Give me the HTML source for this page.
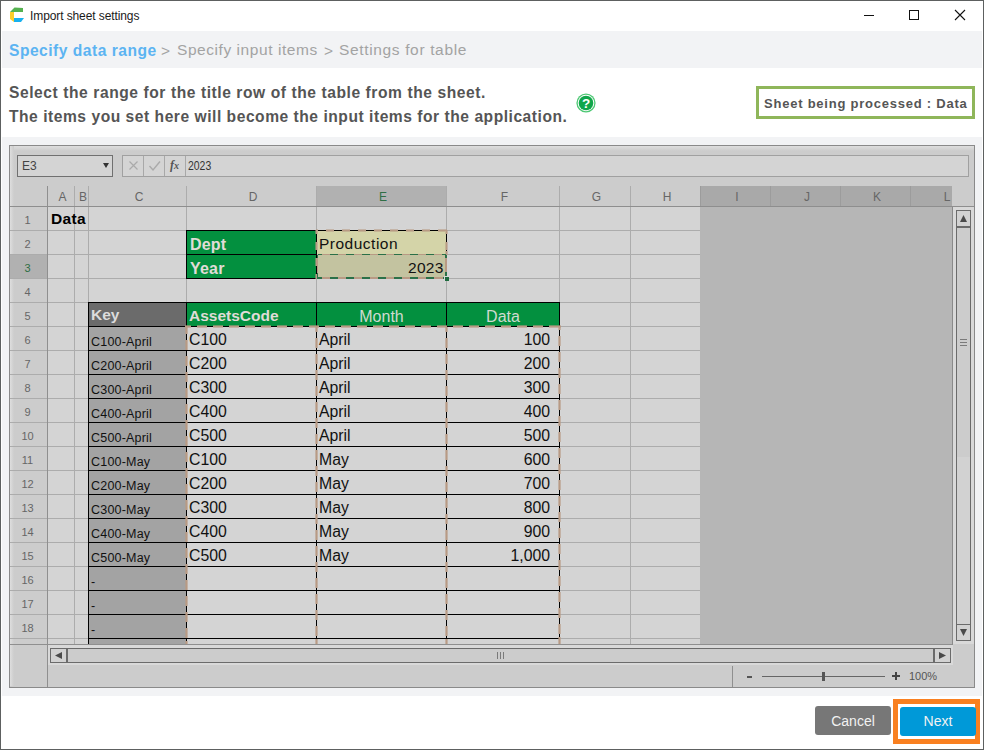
<!DOCTYPE html><html><head><meta charset="utf-8"><style>
html,body{margin:0;padding:0;}
body{width:984px;height:750px;position:relative;overflow:hidden;background:#fff;font-family:"Liberation Sans",sans-serif;}
div{position:absolute;box-sizing:border-box;}
.t{white-space:pre;line-height:1;}
</style></head><body>
<div style="left:0px;top:0px;width:984px;height:750px;border:1px solid #5d6060;"></div>
<svg style="position:absolute;left:0;top:0" width="40" height="30">
<polygon points="10,12 14.5,7.5 23,8 23,12" fill="#55b150"/>
<polygon points="10,12 14,12 14,22 10,19" fill="#fbcd2b"/>
<polygon points="14,18 24,18 21,22 14,22" fill="#18b0ee"/>
</svg>
<div class="t" style="left:30px;top:10px;font-size:12px;color:#1a1a1a;letter-spacing:-0.1px;">Import sheet settings</div>
<div style="left:864px;top:15px;width:10px;height:1px;background:#111;"></div>
<div style="left:909px;top:10px;width:10px;height:10px;border:1px solid #111;"></div>
<svg style="position:absolute;left:954px;top:9px" width="12" height="12"><path d="M1 1L11 11M11 1L1 11" stroke="#111" stroke-width="1.1"/></svg>
<div style="left:2px;top:31px;width:980px;height:37px;background:#f2f3f5;"></div>
<div class="t" style="left:9px;top:43px;font-size:15.6px;font-weight:bold;color:#5cb4f2;letter-spacing:0.5px;">Specify data range</div>
<div class="t" style="left:161px;top:43px;font-size:15.5px;color:#a3a3a3;">&gt;</div>
<div class="t" style="left:177px;top:42px;font-size:15.5px;color:#a3a3a3;letter-spacing:0.56px;">Specify input items</div>
<div class="t" style="left:324px;top:43px;font-size:15.5px;color:#a3a3a3;">&gt;</div>
<div class="t" style="left:339px;top:42px;font-size:15.5px;color:#a3a3a3;letter-spacing:0.65px;">Settings for table</div>
<div class="t" style="left:9px;top:84.6px;font-size:15.6px;font-weight:bold;color:#555;letter-spacing:0.57px;">Select the range for the title row of the table from the sheet.</div>
<div class="t" style="left:9px;top:108.6px;font-size:15.6px;font-weight:bold;color:#555;letter-spacing:0.53px;">The items you set here will become the input items for the application.</div>
<svg style="position:absolute;left:576px;top:93px" width="20" height="20">
<circle cx="10" cy="10" r="9.6" fill="#4cc873"/>
<circle cx="10" cy="10" r="8.3" fill="#fff"/>
<circle cx="10" cy="10" r="7.3" fill="#0fa64a"/>
<text x="10" y="14.8" text-anchor="middle" font-family="Liberation Sans" font-weight="bold" font-size="13.5" fill="#fff">?</text>
</svg>
<div style="left:756px;top:86px;width:219px;height:33px;border:3px solid #8fb65a;"></div>
<div class="t" style="left:764px;top:97px;font-size:13px;font-weight:bold;color:#555;letter-spacing:0.77px;">Sheet being processed : Data</div>
<div style="left:2px;top:137px;width:980px;height:559px;background:#f2f3f5;"></div>
<div style="left:9px;top:145px;width:966px;height:543px;border:1px solid #8a8a8a;background:#cccccc;"></div>
<div style="left:10px;top:146px;width:964px;height:5px;background:linear-gradient(#dedede,#cccccc);"></div>
<div style="left:10px;top:146px;width:4px;height:540px;background:linear-gradient(to right,#dedede,#cccccc);"></div>
<div style="left:17px;top:155px;width:96px;height:22px;border:1px solid #707070;background:#d4d4d4;"></div>
<div class="t" style="left:22px;top:160px;font-size:12px;color:#444;">E3</div>
<svg style="position:absolute;left:103px;top:163px" width="6" height="5"><polygon points="0,0 6,0 3,5" fill="#333"/></svg>
<div style="left:122px;top:155px;width:847px;height:22px;border:1px solid #a0a0a0;background:#d4d4d4;"></div>
<div style="left:143px;top:156px;width:1px;height:20px;background:#a8a8a8;"></div>
<div style="left:164px;top:156px;width:1px;height:20px;background:#a8a8a8;"></div>
<div style="left:185px;top:156px;width:1px;height:20px;background:#a8a8a8;"></div>
<svg style="position:absolute;left:126px;top:158px" width="16" height="16"><path d="M3.5 3.5L11.5 11.5M11.5 3.5L3.5 11.5" stroke="#aaa" stroke-width="1.2"/></svg>
<svg style="position:absolute;left:147px;top:158px" width="16" height="16"><path d="M2.5 8L6 12L13 3.5" stroke="#aaa" stroke-width="1.4" fill="none"/></svg>
<div class="t" style="left:170px;top:159px;font-size:12px;font-style:italic;font-weight:bold;font-family:'Liberation Serif',serif;color:#555;">f<span style="font-size:10px">x</span></div>
<div class="t" style="left:188px;top:160px;font-size:12px;color:#333;transform:scaleX(0.87);transform-origin:0 0;">2023</div>
<div style="left:48px;top:207px;width:652px;height:437px;background:#d4d4d4;"></div>
<div style="left:700px;top:186px;width:252px;height:458px;background:#b6b6b6;"></div>
<div style="left:700px;top:186px;width:252px;height:20px;background:#a9a9a9;"></div>
<div style="left:316px;top:186px;width:130px;height:20px;background:#b1b1b1;"></div>
<div style="left:10px;top:254px;width:37px;height:24px;background:#b1b1b1;"></div>
<div style="left:10px;top:230px;width:690px;height:1px;background:#acacac;"></div>
<div style="left:10px;top:254px;width:690px;height:1px;background:#acacac;"></div>
<div style="left:10px;top:278px;width:690px;height:1px;background:#acacac;"></div>
<div style="left:10px;top:302px;width:690px;height:1px;background:#acacac;"></div>
<div style="left:10px;top:326px;width:690px;height:1px;background:#acacac;"></div>
<div style="left:10px;top:350px;width:690px;height:1px;background:#acacac;"></div>
<div style="left:10px;top:374px;width:690px;height:1px;background:#acacac;"></div>
<div style="left:10px;top:398px;width:690px;height:1px;background:#acacac;"></div>
<div style="left:10px;top:422px;width:690px;height:1px;background:#acacac;"></div>
<div style="left:10px;top:446px;width:690px;height:1px;background:#acacac;"></div>
<div style="left:10px;top:470px;width:690px;height:1px;background:#acacac;"></div>
<div style="left:10px;top:494px;width:690px;height:1px;background:#acacac;"></div>
<div style="left:10px;top:518px;width:690px;height:1px;background:#acacac;"></div>
<div style="left:10px;top:542px;width:690px;height:1px;background:#acacac;"></div>
<div style="left:10px;top:566px;width:690px;height:1px;background:#acacac;"></div>
<div style="left:10px;top:590px;width:690px;height:1px;background:#acacac;"></div>
<div style="left:10px;top:614px;width:690px;height:1px;background:#acacac;"></div>
<div style="left:10px;top:638px;width:690px;height:1px;background:#acacac;"></div>
<div style="left:10px;top:644px;width:943px;height:1px;background:#8f8f8f;"></div>
<div style="left:47px;top:186px;width:1px;height:458px;background:#8f8f8f;"></div>
<div style="left:74px;top:186px;width:1px;height:458px;background:#acacac;"></div>
<div style="left:88px;top:186px;width:1px;height:458px;background:#acacac;"></div>
<div style="left:186px;top:186px;width:1px;height:458px;background:#acacac;"></div>
<div style="left:316px;top:186px;width:1px;height:458px;background:#acacac;"></div>
<div style="left:446px;top:186px;width:1px;height:458px;background:#acacac;"></div>
<div style="left:559px;top:186px;width:1px;height:458px;background:#acacac;"></div>
<div style="left:630px;top:186px;width:1px;height:458px;background:#acacac;"></div>
<div style="left:700px;top:186px;width:1px;height:20px;background:#9c9c9c;"></div>
<div style="left:770px;top:186px;width:1px;height:20px;background:#9c9c9c;"></div>
<div style="left:840px;top:186px;width:1px;height:20px;background:#9c9c9c;"></div>
<div style="left:910px;top:186px;width:1px;height:20px;background:#9c9c9c;"></div>
<div style="left:10px;top:206px;width:964px;height:1px;background:#8e8e8e;"></div>
<div class="t" style="left:49px;top:191px;width:27px;text-align:center;font-size:12px;color:#666;">A</div>
<div class="t" style="left:76px;top:191px;width:14px;text-align:center;font-size:12px;color:#666;">B</div>
<div class="t" style="left:90px;top:191px;width:98px;text-align:center;font-size:12px;color:#666;">C</div>
<div class="t" style="left:188px;top:191px;width:130px;text-align:center;font-size:12px;color:#666;">D</div>
<div class="t" style="left:318px;top:191px;width:130px;text-align:center;font-size:12px;color:#2f6e45;">E</div>
<div class="t" style="left:448px;top:191px;width:113px;text-align:center;font-size:12px;color:#666;">F</div>
<div class="t" style="left:561px;top:191px;width:71px;text-align:center;font-size:12px;color:#666;">G</div>
<div class="t" style="left:632px;top:191px;width:70px;text-align:center;font-size:12px;color:#666;">H</div>
<div class="t" style="left:702px;top:191px;width:70px;text-align:center;font-size:12px;color:#666;">I</div>
<div class="t" style="left:772px;top:191px;width:70px;text-align:center;font-size:12px;color:#666;">J</div>
<div class="t" style="left:842px;top:191px;width:70px;text-align:center;font-size:12px;color:#666;">K</div>
<div class="t" style="left:912px;top:191px;width:70px;text-align:center;font-size:12px;color:#666;">L</div>
<div class="t" style="left:9px;top:215px;width:37px;text-align:center;font-size:11px;color:#666;">1</div>
<div class="t" style="left:9px;top:239px;width:37px;text-align:center;font-size:11px;color:#666;">2</div>
<div class="t" style="left:9px;top:263px;width:37px;text-align:center;font-size:11px;color:#2f6e45;">3</div>
<div class="t" style="left:9px;top:287px;width:37px;text-align:center;font-size:11px;color:#666;">4</div>
<div class="t" style="left:9px;top:311px;width:37px;text-align:center;font-size:11px;color:#666;">5</div>
<div class="t" style="left:9px;top:335px;width:37px;text-align:center;font-size:11px;color:#666;">6</div>
<div class="t" style="left:9px;top:359px;width:37px;text-align:center;font-size:11px;color:#666;">7</div>
<div class="t" style="left:9px;top:383px;width:37px;text-align:center;font-size:11px;color:#666;">8</div>
<div class="t" style="left:9px;top:407px;width:37px;text-align:center;font-size:11px;color:#666;">9</div>
<div class="t" style="left:9px;top:431px;width:37px;text-align:center;font-size:11px;color:#666;">10</div>
<div class="t" style="left:9px;top:455px;width:37px;text-align:center;font-size:11px;color:#666;">11</div>
<div class="t" style="left:9px;top:479px;width:37px;text-align:center;font-size:11px;color:#666;">12</div>
<div class="t" style="left:9px;top:503px;width:37px;text-align:center;font-size:11px;color:#666;">13</div>
<div class="t" style="left:9px;top:527px;width:37px;text-align:center;font-size:11px;color:#666;">14</div>
<div class="t" style="left:9px;top:551px;width:37px;text-align:center;font-size:11px;color:#666;">15</div>
<div class="t" style="left:9px;top:575px;width:37px;text-align:center;font-size:11px;color:#666;">16</div>
<div class="t" style="left:9px;top:599px;width:37px;text-align:center;font-size:11px;color:#666;">17</div>
<div class="t" style="left:9px;top:623px;width:37px;text-align:center;font-size:11px;color:#666;">18</div>
<div class="t" style="left:51px;top:211px;font-size:15.5px;font-weight:bold;color:#000;letter-spacing:0.3px;">Data</div>
<div style="left:186px;top:230px;width:131px;height:49px;background:#03903f;border:1px solid #000;"></div>
<div style="left:186px;top:254px;width:131px;height:1px;background:#000;"></div>
<div class="t" style="left:190px;top:237px;font-size:16px;font-weight:bold;color:#e0dcd8;letter-spacing:0.2px;">Dept</div>
<div class="t" style="left:190px;top:261px;font-size:16px;font-weight:bold;color:#e0dcd8;letter-spacing:0.2px;">Year</div>
<div style="left:317px;top:231px;width:129px;height:23px;background:#d4d4a8;"></div>
<div style="left:317px;top:255px;width:129px;height:23px;background:#c3c3a0;"></div>
<div class="t" style="left:319px;top:236px;font-size:15.5px;color:#111;letter-spacing:0.5px;">Production</div>
<div class="t" style="left:408px;top:260px;font-size:15.5px;color:#111;letter-spacing:0.3px;">2023</div>
<div style="left:88px;top:302px;width:472px;height:25px;background:#000;"></div>
<div style="left:89px;top:303px;width:97px;height:23px;background:#6b6b6b;"></div>
<div style="left:187px;top:303px;width:129px;height:23px;background:#03903f;"></div>
<div style="left:317px;top:303px;width:129px;height:23px;background:#03903f;"></div>
<div style="left:447px;top:303px;width:112px;height:23px;background:#03903f;"></div>
<div class="t" style="left:91px;top:307px;font-size:15.5px;font-weight:bold;color:#dcdcdc;">Key</div>
<div class="t" style="left:189px;top:308px;font-size:15.5px;font-weight:bold;color:#e0dcd8;">AssetsCode</div>
<div class="t" style="left:317px;top:309px;width:129px;text-align:center;font-size:16px;color:#d0dad0;">Month</div>
<div class="t" style="left:447px;top:309px;width:112px;text-align:center;font-size:16px;color:#d0dad0;">Data</div>
<div style="left:89px;top:327px;width:97px;height:317px;background:#a3a3a3;"></div>
<div style="left:187px;top:327px;width:372px;height:317px;background:#d4d4d4;"></div>
<div style="left:88px;top:326px;width:472px;height:1px;background:#000;"></div>
<div style="left:88px;top:350px;width:472px;height:1px;background:#000;"></div>
<div style="left:88px;top:374px;width:472px;height:1px;background:#000;"></div>
<div style="left:88px;top:398px;width:472px;height:1px;background:#000;"></div>
<div style="left:88px;top:422px;width:472px;height:1px;background:#000;"></div>
<div style="left:88px;top:446px;width:472px;height:1px;background:#000;"></div>
<div style="left:88px;top:470px;width:472px;height:1px;background:#000;"></div>
<div style="left:88px;top:494px;width:472px;height:1px;background:#000;"></div>
<div style="left:88px;top:518px;width:472px;height:1px;background:#000;"></div>
<div style="left:88px;top:542px;width:472px;height:1px;background:#000;"></div>
<div style="left:88px;top:566px;width:472px;height:1px;background:#000;"></div>
<div style="left:88px;top:590px;width:472px;height:1px;background:#000;"></div>
<div style="left:88px;top:614px;width:472px;height:1px;background:#000;"></div>
<div style="left:88px;top:638px;width:472px;height:1px;background:#000;"></div>
<div style="left:88px;top:302px;width:1px;height:342px;background:#000;"></div>
<div class="t" style="left:91px;top:336px;font-size:12.5px;color:#111;letter-spacing:0.2px;">C100-April</div>
<div class="t" style="left:189px;top:332px;font-size:15.8px;color:#111;letter-spacing:0px;">C100</div>
<div class="t" style="left:319px;top:332px;font-size:15.8px;color:#111;letter-spacing:0px;">April</div>
<div class="t" style="left:447px;top:332px;width:103px;text-align:right;font-size:15.8px;color:#111;letter-spacing:0px;">100</div>
<div class="t" style="left:91px;top:360px;font-size:12.5px;color:#111;letter-spacing:0.2px;">C200-April</div>
<div class="t" style="left:189px;top:356px;font-size:15.8px;color:#111;letter-spacing:0px;">C200</div>
<div class="t" style="left:319px;top:356px;font-size:15.8px;color:#111;letter-spacing:0px;">April</div>
<div class="t" style="left:447px;top:356px;width:103px;text-align:right;font-size:15.8px;color:#111;letter-spacing:0px;">200</div>
<div class="t" style="left:91px;top:384px;font-size:12.5px;color:#111;letter-spacing:0.2px;">C300-April</div>
<div class="t" style="left:189px;top:380px;font-size:15.8px;color:#111;letter-spacing:0px;">C300</div>
<div class="t" style="left:319px;top:380px;font-size:15.8px;color:#111;letter-spacing:0px;">April</div>
<div class="t" style="left:447px;top:380px;width:103px;text-align:right;font-size:15.8px;color:#111;letter-spacing:0px;">300</div>
<div class="t" style="left:91px;top:408px;font-size:12.5px;color:#111;letter-spacing:0.2px;">C400-April</div>
<div class="t" style="left:189px;top:404px;font-size:15.8px;color:#111;letter-spacing:0px;">C400</div>
<div class="t" style="left:319px;top:404px;font-size:15.8px;color:#111;letter-spacing:0px;">April</div>
<div class="t" style="left:447px;top:404px;width:103px;text-align:right;font-size:15.8px;color:#111;letter-spacing:0px;">400</div>
<div class="t" style="left:91px;top:432px;font-size:12.5px;color:#111;letter-spacing:0.2px;">C500-April</div>
<div class="t" style="left:189px;top:428px;font-size:15.8px;color:#111;letter-spacing:0px;">C500</div>
<div class="t" style="left:319px;top:428px;font-size:15.8px;color:#111;letter-spacing:0px;">April</div>
<div class="t" style="left:447px;top:428px;width:103px;text-align:right;font-size:15.8px;color:#111;letter-spacing:0px;">500</div>
<div class="t" style="left:91px;top:456px;font-size:12.5px;color:#111;letter-spacing:0.2px;">C100-May</div>
<div class="t" style="left:189px;top:452px;font-size:15.8px;color:#111;letter-spacing:0px;">C100</div>
<div class="t" style="left:319px;top:452px;font-size:15.8px;color:#111;letter-spacing:0px;">May</div>
<div class="t" style="left:447px;top:452px;width:103px;text-align:right;font-size:15.8px;color:#111;letter-spacing:0px;">600</div>
<div class="t" style="left:91px;top:480px;font-size:12.5px;color:#111;letter-spacing:0.2px;">C200-May</div>
<div class="t" style="left:189px;top:476px;font-size:15.8px;color:#111;letter-spacing:0px;">C200</div>
<div class="t" style="left:319px;top:476px;font-size:15.8px;color:#111;letter-spacing:0px;">May</div>
<div class="t" style="left:447px;top:476px;width:103px;text-align:right;font-size:15.8px;color:#111;letter-spacing:0px;">700</div>
<div class="t" style="left:91px;top:504px;font-size:12.5px;color:#111;letter-spacing:0.2px;">C300-May</div>
<div class="t" style="left:189px;top:500px;font-size:15.8px;color:#111;letter-spacing:0px;">C300</div>
<div class="t" style="left:319px;top:500px;font-size:15.8px;color:#111;letter-spacing:0px;">May</div>
<div class="t" style="left:447px;top:500px;width:103px;text-align:right;font-size:15.8px;color:#111;letter-spacing:0px;">800</div>
<div class="t" style="left:91px;top:528px;font-size:12.5px;color:#111;letter-spacing:0.2px;">C400-May</div>
<div class="t" style="left:189px;top:524px;font-size:15.8px;color:#111;letter-spacing:0px;">C400</div>
<div class="t" style="left:319px;top:524px;font-size:15.8px;color:#111;letter-spacing:0px;">May</div>
<div class="t" style="left:447px;top:524px;width:103px;text-align:right;font-size:15.8px;color:#111;letter-spacing:0px;">900</div>
<div class="t" style="left:91px;top:552px;font-size:12.5px;color:#111;letter-spacing:0.2px;">C500-May</div>
<div class="t" style="left:189px;top:548px;font-size:15.8px;color:#111;letter-spacing:0px;">C500</div>
<div class="t" style="left:319px;top:548px;font-size:15.8px;color:#111;letter-spacing:0px;">May</div>
<div class="t" style="left:447px;top:548px;width:103px;text-align:right;font-size:15.8px;color:#111;letter-spacing:0px;">1,000</div>
<div class="t" style="left:91px;top:576px;font-size:12.5px;color:#111;letter-spacing:0.2px;">-</div>
<div class="t" style="left:91px;top:600px;font-size:12.5px;color:#111;letter-spacing:0.2px;">-</div>
<div class="t" style="left:91px;top:624px;font-size:12.5px;color:#111;letter-spacing:0.2px;">-</div>
<div style="left:186px;top:302px;width:1px;height:342px;background:#000;"></div>
<div style="left:316px;top:302px;width:1px;height:342px;background:#000;"></div>
<div style="left:446px;top:302px;width:1px;height:342px;background:#000;"></div>
<div style="left:559px;top:302px;width:1px;height:342px;background:#000;"></div>
<div style="left:0;top:0;width:984px;height:750px;opacity:0.6">
<div style="left:185px;top:325px;width:376px;height:3px;background:repeating-linear-gradient(to right,#b89a84 0 10px,transparent 10px 16px);background-position:-4px 0;"></div>
</div>
<div style="left:185px;top:326px;width:376px;height:1px;background:repeating-linear-gradient(to right,#b89a84 0 10px,transparent 10px 16px);background-position:-4px 0;"></div>
<div style="left:0;top:0;width:984px;height:750px;opacity:0.6">
<div style="left:185px;top:327px;width:3px;height:317px;background:repeating-linear-gradient(to bottom,#b89a84 0 10px,transparent 10px 16px);background-position:0 -3px;"></div>
</div>
<div style="left:186px;top:327px;width:1px;height:317px;background:repeating-linear-gradient(to bottom,#b89a84 0 10px,transparent 10px 16px);background-position:0 -3px;"></div>
<div style="left:0;top:0;width:984px;height:750px;opacity:0.6">
<div style="left:315px;top:327px;width:3px;height:317px;background:repeating-linear-gradient(to bottom,#b89a84 0 10px,transparent 10px 16px);background-position:0 -5px;"></div>
</div>
<div style="left:316px;top:327px;width:1px;height:317px;background:repeating-linear-gradient(to bottom,#b89a84 0 10px,transparent 10px 16px);background-position:0 -5px;"></div>
<div style="left:0;top:0;width:984px;height:750px;opacity:0.6">
<div style="left:445px;top:327px;width:3px;height:317px;background:repeating-linear-gradient(to bottom,#b89a84 0 10px,transparent 10px 16px);background-position:0 -5px;"></div>
</div>
<div style="left:446px;top:327px;width:1px;height:317px;background:repeating-linear-gradient(to bottom,#b89a84 0 10px,transparent 10px 16px);background-position:0 -5px;"></div>
<div style="left:0;top:0;width:984px;height:750px;opacity:0.6">
<div style="left:558px;top:327px;width:3px;height:317px;background:repeating-linear-gradient(to bottom,#b89a84 0 10px,transparent 10px 16px);background-position:0 -7px;"></div>
</div>
<div style="left:559px;top:327px;width:1px;height:317px;background:repeating-linear-gradient(to bottom,#b89a84 0 10px,transparent 10px 16px);background-position:0 -7px;"></div>
<div style="left:0;top:0;width:984px;height:750px;opacity:0.55">
<div style="left:316px;top:229px;width:131px;height:3px;background:repeating-linear-gradient(to right,#b89a84 0 8px,transparent 8px 16px);background-position:-6px 0;"></div>
<div style="left:315px;top:230px;width:3px;height:49px;background:repeating-linear-gradient(to bottom,#b89a84 0 8px,transparent 8px 16px);background-position:0 -4px;"></div>
<div style="left:445px;top:230px;width:3px;height:25px;background:repeating-linear-gradient(to bottom,#b89a84 0 8px,transparent 8px 16px);background-position:0 -4px;"></div>
</div>
<div style="left:316px;top:230px;width:131px;height:1px;background:repeating-linear-gradient(to right,#b89a84 0 8px,#000 8px 16px);background-position:-6px 0;"></div>
<div style="left:446px;top:230px;width:1px;height:25px;background:repeating-linear-gradient(to bottom,#b89a84 0 8px,#000 8px 16px);background-position:0 -4px;"></div>
<div style="left:316px;top:230px;width:1px;height:49px;background:repeating-linear-gradient(to bottom,#b89a84 0 8px,#000 8px 16px);background-position:0 -4px;"></div>
<div style="left:318px;top:254px;width:128px;height:1px;background:repeating-linear-gradient(to right,#b89a84 0 8px,#2a7048 8px 16px);background-position:-12px 0;"></div>
<div style="left:317px;top:277px;width:129px;height:2px;background:repeating-linear-gradient(to right,#b89a84 0 8px,#2a7048 8px 16px);background-position:-11px 0;"></div>
<div style="left:317px;top:255px;width:1px;height:23px;background:repeating-linear-gradient(to bottom,#b89a84 0 8px,#2a7048 8px 16px);background-position:0 -13px;"></div>
<div style="left:445px;top:255px;width:2px;height:22px;background:repeating-linear-gradient(to bottom,#b89a84 0 8px,#2a7048 8px 16px);background-position:0 -13px;"></div>
<div style="left:444px;top:276px;width:5px;height:5px;background:#1f6b3f;border:1px solid #d8d8d8;border-right:none;border-bottom:none;"></div>
<div style="left:953px;top:207px;width:21px;height:437px;background:#d9d9d9;"></div>
<div style="left:952px;top:207px;width:1px;height:438px;background:#8a8a8a;"></div>
<div style="left:956px;top:210px;width:15px;height:17px;border:1px solid #6b6b6b;background:#d2d2d2;"></div>
<svg style="position:absolute;left:960px;top:215px" width="7" height="7"><polygon points="0,7 3.5,0 7,7" fill="#4a4a4a"/></svg>
<div style="left:956px;top:227px;width:15px;height:231px;border:1px solid #6b6b6b;background:#cccccc;"></div>
<div style="left:960px;top:339px;width:7px;height:1px;background:#7a7a7a;"></div>
<div style="left:960px;top:342px;width:7px;height:1px;background:#7a7a7a;"></div>
<div style="left:960px;top:345px;width:7px;height:1px;background:#7a7a7a;"></div>
<div style="left:956px;top:457px;width:15px;height:168px;border-left:1px solid #6b6b6b;border-right:1px solid #6b6b6b;background:#d2d2d2;"></div>
<div style="left:956px;top:624px;width:15px;height:17px;border:1px solid #6b6b6b;background:#d2d2d2;"></div>
<svg style="position:absolute;left:960px;top:629px" width="7" height="7"><polygon points="0,0 7,0 3.5,7" fill="#4a4a4a"/></svg>
<div style="left:48px;top:645px;width:905px;height:20px;background:#d9d9d9;"></div>
<div style="left:50px;top:648px;width:17px;height:15px;border:1px solid #6b6b6b;background:#d2d2d2;"></div>
<svg style="position:absolute;left:55px;top:652px" width="7" height="7"><polygon points="7,0 7,7 0,3.5" fill="#4a4a4a"/></svg>
<div style="left:67px;top:648px;width:867px;height:15px;border:1px solid #6b6b6b;background:#cccccc;"></div>
<div style="left:497px;top:652px;width:1px;height:7px;background:#7a7a7a;"></div>
<div style="left:500px;top:652px;width:1px;height:7px;background:#7a7a7a;"></div>
<div style="left:503px;top:652px;width:1px;height:7px;background:#7a7a7a;"></div>
<div style="left:934px;top:648px;width:17px;height:15px;border:1px solid #6b6b6b;background:#d2d2d2;"></div>
<svg style="position:absolute;left:939px;top:652px" width="7" height="7"><polygon points="0,0 7,3.5 0,7" fill="#4a4a4a"/></svg>
<div style="left:47px;top:645px;width:1px;height:42px;background:#8f8f8f;"></div>
<div style="left:732px;top:666px;width:1px;height:21px;background:#8f8f8f;"></div>
<div style="left:747px;top:676px;width:5px;height:2px;background:#555;"></div>
<div style="left:762px;top:676px;width:123px;height:1px;background:#666;"></div>
<div style="left:822px;top:672px;width:3px;height:9px;background:#555;"></div>
<div style="left:892px;top:675px;width:8px;height:2px;background:#444;"></div>
<div style="left:895px;top:672px;width:2px;height:8px;background:#444;"></div>
<div class="t" style="left:909px;top:671px;font-size:11px;color:#555;">100%</div>
<div style="left:815px;top:706px;width:76px;height:29px;background:#777;border-radius:3px;"></div>
<div class="t" style="left:815px;top:714px;width:76px;text-align:center;font-size:14px;color:#f2f2f2;">Cancel</div>
<div style="left:893px;top:699px;width:87px;height:45px;border:5px solid #f98020;"></div>
<div style="left:900px;top:707px;width:76px;height:29px;background:#0099d8;border-radius:3px;"></div>
<div class="t" style="left:900px;top:714px;width:76px;text-align:center;font-size:14px;color:#f2f2f2;">Next</div>
</body></html>
